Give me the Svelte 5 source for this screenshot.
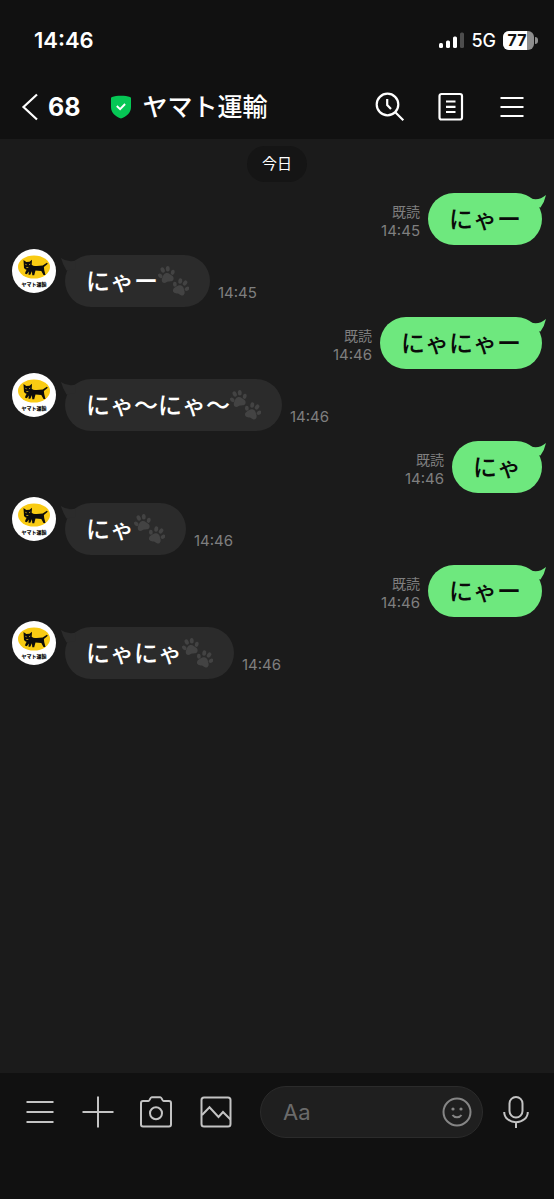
<script>
  let draft = $state('');

  const contact = 'ヤマト運輸';
  const unread = 68;
  const battery = 77;

  const messages = [
    { id: 1, mine: true, text: 'にゃー', time: '14:45' },
    { id: 2, mine: false, text: 'にゃー', time: '14:45' },
    { id: 3, mine: true, text: 'にゃにゃー', time: '14:46' },
    { id: 4, mine: false, text: 'にゃ〜にゃ〜', time: '14:46' },
    { id: 5, mine: true, text: 'にゃ', time: '14:46' },
    { id: 6, mine: false, text: 'にゃ', time: '14:46' },
    { id: 7, mine: true, text: 'にゃー', time: '14:46' },
    { id: 8, mine: false, text: 'にゃにゃ', time: '14:46' }
  ];
</script>

{#snippet paw()}
  <ellipse cx="2.2" cy="8.4" rx="1.9" ry="2.6" transform="rotate(-28 2.2 8.4)" />
  <ellipse cx="6" cy="3.4" rx="2" ry="2.8" transform="rotate(-10 6 3.4)" />
  <ellipse cx="11.2" cy="3.4" rx="2" ry="2.8" transform="rotate(12 11.2 3.4)" />
  <ellipse cx="15.2" cy="8" rx="1.9" ry="2.6" transform="rotate(30 15.2 8)" />
  <path d="M8.6 7.2c2.8 0 3.6 2.2 5 3.8 1.6 1.8 1.400 4.800-1 5.300-1.500.3-2.600-.5-4-.4-1.500 0-2.700.9-4.200.4-2.300-.7-2.300-3.500-.8-5.300 1.300-1.600 2.200-3.800 5-3.800z" />
{/snippet}

<div class="screen">
  <header>
    <div class="status">
      <span class="clock">14:46</span>
      <div class="signal">
        <svg width="25" height="17" viewBox="0 0 25 17" aria-hidden="true">
          <rect x="0" y="11" width="4" height="5" rx="1.5" fill="#fff" />
          <rect x="7" y="8.5" width="4" height="7.5" rx="1.5" fill="#fff" />
          <rect x="14" y="4.5" width="4" height="11.5" rx="1.5" fill="#fff" />
          <rect x="21" y="0.5" width="4" height="15.5" rx="1.5" fill="#4d4d4d" />
        </svg>
        <span class="network">5G</span>
        <div class="battery">
          <div class="cell">
            <div class="charge" style="width: {battery}%"></div>
            <span>{battery}</span>
          </div>
          <div class="cap"></div>
        </div>
      </div>
    </div>

    <nav>
      <button class="back" aria-label="戻る">
        <svg width="18" height="28" viewBox="0 0 18 28">
          <path d="M16 1.5 2.5 14 16 26.5" fill="none" stroke="#fff" stroke-width="2.2" />
        </svg>
        <span>{unread}</span>
      </button>
      <svg class="shield" width="22" height="24" viewBox="0 0 22 24" aria-hidden="true">
        <path d="M11 .8c3.500 0 6.800.5 9 1.200.7.2 1 .7 1 1.300v8.700c0 6-4.500 9.400-10 11.600C5.500 21.400 1 18 1 12V3.300C1 2.700 1.300 2.200 2 2 4.200 1.300 7.500.8 11 .8z" fill="#06c755" />
        <path d="m6.8 11 3.3 3.2 5-5.2" fill="none" stroke="#fff" stroke-width="1.9" />
      </svg>
      <h1>{contact}</h1>
      <div class="tools">
        <button aria-label="検索">
          <svg width="30" height="30" viewBox="0 0 30 30">
            <circle cx="12.5" cy="12.5" r="10.8" />
            <path d="m20.3 20.3 8 8M12.2 7v6l3.8 4" />
          </svg>
        </button>
        <button aria-label="ノート">
          <svg width="26" height="30" viewBox="0 0 26 30">
            <rect x="1.5" y="2" width="22.5" height="25.5" rx="2" />
            <path d="M8 9.5h9.500M8 14.800h9.500M8 20h9.500" />
          </svg>
        </button>
        <button aria-label="メニュー">
          <svg width="24" height="24" viewBox="0 0 24 24">
            <path d="M0.500 3h23M0.500 12h23M0.500 21h23" />
          </svg>
        </button>
      </div>
    </nav>
  </header>

  <main>
    <div class="date">今日</div>

    {#each messages as message (message.id)}
      {#if message.mine}
        <div class="row sent">
          <div class="meta">
            <span class="read">既読</span>
            <span>{message.time}</span>
          </div>
          <div class="bubble">
            <span class="text">{message.text}</span>
            <svg class="tail" width="20" height="18" viewBox="0 0 20 18" aria-hidden="true">
              <path d="M5 5.500Q13 8 20 2Q18.500 9 14.500 14.500L6 14z" />
            </svg>
          </div>
        </div>
      {:else}
        <div class="row received">
          <svg class="avatar" width="44" height="44" viewBox="0 0 44 44" role="img" aria-label={contact}>
            <circle cx="22" cy="22" r="22" fill="#fff" />
            <ellipse cx="22" cy="18" rx="16" ry="11.5" fill="#f9cb13" />
            <path d="M11.500 11l2.800 2 3.200-.2 2.500-2-.3 5 1.500.9c3 .4 6.500.2 9.500-.2l4.200-2.800.9 1-3.900 3.400.3 3 1.300 5h-2l-2.200-4.200-5.800-.5-1.300 4.900h-1.900l-.4-4-1.600 3.500h-1.800l.3-3.200-2 2.700-1.900-.8 1.300-3.300-2.200-2.200z" fill="#0c0c0c" />
            <path d="m13.300 15.300 1.400.5M17 15.700l1.300-.6M14.300 18.500h2M12.500 21h2" stroke="#f9cb13" stroke-width=".7" />
            <text x="22" y="37" text-anchor="middle">{contact}</text>
          </svg>
          <div class="bubble">
            <svg class="tail" width="20" height="18" viewBox="0 0 20 18" aria-hidden="true">
              <path d="M0 3Q7 8 15 5.500L14 14 5.500 15.500Q1.500 9 0 3z" />
            </svg>
            <span class="text">{message.text}</span>
            <svg class="paws" width="31" height="30" viewBox="0 0 31 30" role="img" aria-label="足あと">
              <g transform="rotate(-14 8 9)">{@render paw()}</g>
              <g transform="translate(14 12) rotate(22 8 9)">{@render paw()}</g>
            </svg>
          </div>
          <div class="meta">{message.time}</div>
        </div>
      {/if}
    {/each}
  </main>

  <footer>
    <button aria-label="メニュー">
      <svg width="28" height="32" viewBox="0 0 28 32">
        <path d="M.5 6h27M.5 16h27M.5 26h27" />
      </svg>
    </button>
    <button aria-label="追加">
      <svg width="32" height="32" viewBox="0 0 32 32">
        <path d="M.5 16h31M16 .5v31" />
      </svg>
    </button>
    <button aria-label="カメラ">
      <svg width="32" height="32" viewBox="0 0 32 32">
        <path d="M3 5h5.500c1.500 0 1.500-3.800 3.200-3.800h8.600C22 1.200 22 5 23.500 5H29a2 2 0 0 1 2 2v21.500a2 2 0 0 1-2 2H3a2 2 0 0 1-2-2V7a2 2 0 0 1 2-2z" />
        <circle cx="16" cy="17.3" r="6" />
      </svg>
    </button>
    <button aria-label="写真">
      <svg width="32" height="32" viewBox="0 0 32 32">
        <rect x="1.5" y="1.5" width="29" height="29" rx="2.5" />
        <path d="m2 19 7.500-7.700 9 9.700 4.500-5 7.500 7.500" />
      </svg>
    </button>
    <div class="field">
      <input type="text" placeholder="Aa" aria-label="メッセージ" bind:value={draft} />
      <button aria-label="スタンプ">
        <svg width="30" height="30" viewBox="0 0 30 30">
          <circle cx="15" cy="15" r="13.5" />
          <path d="M10.500 18c2 3 7 3 9 0" />
          <circle class="eye" cx="11" cy="12" r="1.6" />
          <circle class="eye" cx="19" cy="12" r="1.6" />
        </svg>
      </button>
    </div>
    <button aria-label="音声">
      <svg width="26" height="32" viewBox="0 0 26 32">
        <rect x="6.5" y="1" width="13" height="20.5" rx="6.5" />
        <path d="M1.200 16c0 6 5.300 10.200 11.800 10.200S24.800 22 24.800 16M13 26.200V32" />
      </svg>
    </button>
  </footer>
</div>

<style>
  :global(body) {
    background: #111;
  }

  .screen {
    display: flex;
    flex-direction: column;
    min-height: 100vh;
    background: #1b1b1b;
    color: #fff;
    font-family: Inter, 'Noto Sans CJK JP', sans-serif;
  }

  button {
    display: flex;
    align-items: center;
    justify-content: center;
    padding: 0;
    border: none;
    background: none;
    color: inherit;
    font: inherit;
    cursor: pointer;
  }

  header {
    background: #111;
  }

  .status {
    display: flex;
    align-items: center;
    justify-content: space-between;
    height: 32px;
    padding: 24px 16px 18px 34px;
  }

  .clock {
    font-size: 22px;
    font-weight: 600;
  }

  .signal {
    display: flex;
    align-items: center;
    gap: 7px;
  }

  .network {
    font-size: 18px;
    font-weight: 500;
  }

  .battery {
    display: flex;
    align-items: center;
    gap: 1px;
  }

  .cell {
    position: relative;
    width: 31px;
    height: 19px;
    border-radius: 6px;
    background: #8e8e8e;
    overflow: hidden;
  }

  .charge {
    height: 100%;
    background: #fff;
  }

  .cell span {
    position: absolute;
    inset: 0;
    padding-right: 3px;
    color: #111;
    font-size: 16px;
    font-weight: 700;
    line-height: 19px;
    text-align: center;
  }

  .cap {
    width: 3px;
    height: 7px;
    border-radius: 0 4px 4px 0;
    background: #8e8e8e;
  }

  nav {
    display: flex;
    align-items: center;
    height: 65px;
    padding: 0 12px 0 21px;
  }

  .back {
    gap: 9px;
    font-size: 25px;
    font-weight: 700;
  }

  .shield {
    margin-left: 29px;
  }

  h1 {
    margin: 0 0 0 11px;
    font-size: 25px;
    font-weight: 500;
    line-height: 32px;
    white-space: nowrap;
  }

  .tools {
    display: flex;
    margin-left: auto;
  }

  .tools button {
    width: 61px;
    height: 44px;
  }

  .tools svg {
    fill: none;
    stroke: #fff;
    stroke-width: 2.2;
  }

  main {
    display: flex;
    flex: 1;
    flex-direction: column;
    padding: 7px 12px;
  }

  .date {
    align-self: center;
    margin-bottom: 11px;
    padding: 0 15px;
    border-radius: 18px;
    background: #151515;
    font-size: 15px;
    line-height: 36px;
  }

  .row {
    display: flex;
    align-items: flex-end;
    gap: 8px;
  }

  .sent {
    justify-content: flex-end;
    margin-bottom: 4px;
  }

  .received {
    margin-bottom: 10px;
    padding-top: 6px;
  }

  .avatar {
    align-self: flex-start;
    margin-top: -6px;
    margin-right: 1px;
  }

  .avatar text {
    fill: #111;
    font-size: 5px;
    font-weight: 900;
  }

  .bubble {
    position: relative;
    display: flex;
    align-items: center;
    height: 52px;
    padding: 0 21px;
    border-radius: 26px;
    font-size: 24px;
    font-weight: 500;
    white-space: nowrap;
  }

  .text {
    padding-bottom: 4px;
  }

  .sent .bubble {
    background: #6ee87e;
    color: #0a0a0a;
  }

  .received .bubble {
    background: #2b2b2b;
  }

  .tail {
    position: absolute;
    top: 0;
  }

  .sent .tail {
    right: -4px;
    fill: #6ee87e;
  }

  .received .tail {
    left: -4px;
    fill: #2b2b2b;
  }

  .paws {
    fill: #434343;
  }

  .meta {
    display: flex;
    flex-direction: column;
    align-items: flex-end;
    padding-bottom: 5px;
    color: #7f7f7f;
    font-size: 15px;
    line-height: 19px;
  }

  .read {
    font-size: 14px;
  }

  footer {
    display: grid;
    grid-template-columns: 58px 58px 58px 62px minmax(0, 1fr) 66px;
    align-items: center;
    padding: 13px 5px 61px 11px;
    background: #111;
  }

  footer svg {
    fill: none;
    stroke: #c4c4c4;
    stroke-width: 2;
  }

  .field {
    display: flex;
    align-items: center;
    height: 50px;
    margin-left: 13px;
    padding: 0 10px 0 22px;
    border: 1px solid #2b2b2b;
    border-radius: 26px;
    background: #1f1f1f;
  }

  .field input {
    flex: 1;
    min-width: 0;
    padding: 0;
    border: none;
    outline: none;
    background: none;
    color: #fff;
    font: inherit;
    font-size: 22px;
  }

  .field input::placeholder {
    color: #6b6b6b;
    opacity: 1;
  }

  .field svg {
    stroke: #858585;
  }

  .field .eye {
    fill: #858585;
    stroke: none;
  }
</style>
